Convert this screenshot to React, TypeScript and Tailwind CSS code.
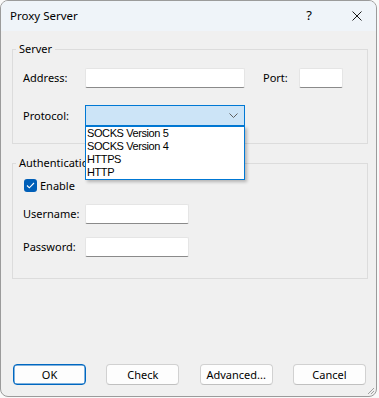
import React from "react";

const ui = { fontFamily: '"Noto Sans", "Open Sans", sans-serif' };
const listFont = { fontFamily: '"Liberation Sans", Arial, sans-serif' };

function TextBox({ w }: { w: string }) {
  return (
    <div
      className={`${w} h-[20px] bg-white border border-[#e5e5e5] border-b-[#8a8a8a] rounded-[2px]`}
    />
  );
}

function Label({ children }: { children: React.ReactNode }) {
  return <span className="w-[62px] shrink-0 text-[11px] leading-[14px] text-black">{children}</span>;
}

function Button({ children, primary }: { children: React.ReactNode; primary?: boolean }) {
  return (
    <button
      className={
        "w-[73px] h-[21px] rounded-[4px] bg-[#fdfdfd] text-[11px] leading-[14px] text-black flex items-center justify-center " +
        (primary
          ? "border border-[#0067c0] shadow-[inset_0_0_0_0.5px_#0067c0]"
          : "border border-[#d1d1d1] border-b-[#c0c0c0]")
      }
    >
      {children}
    </button>
  );
}

export default function App() {
  const protocols = ["SOCKS Version 5", "SOCKS Version 4", "HTTPS", "HTTP"];

  return (
    <div className="w-[379px] h-[398px] bg-[#f9f9f9]" style={ui}>
      <div className="w-[377px] h-[397px] rounded-[8px] border border-[#9b9b9b] bg-[#f0f0f0] flex flex-col overflow-hidden relative">
        {/* title bar */}
        <div className="h-[30px] shrink-0 bg-[#eff4f9] flex items-center pl-[9px] text-[11.5px] text-black">
          <span>Proxy Server</span>
          <span className="ml-auto mr-[40px] text-[13px]">?</span>
          <svg width="10" height="10" viewBox="0 0 10 10" className="mr-[14px]">
            <path d="M0.5 0.5 L9.5 9.5 M9.5 0.5 L0.5 9.5" stroke="#1a1a1a" strokeWidth="1" />
          </svg>
        </div>

        <div className="flex-1 flex flex-col pl-[11px] pr-[8px] pt-[11px]">
          {/* Server */}
          <fieldset className="border border-[#dcdcdc] pb-[17px]">
            <legend className="ml-[3px] px-[3px] text-[11px] leading-[14px] text-black">Server</legend>
            <div className="pl-[10px]">
              <div className="flex items-center mt-[12px] h-[20px]">
                <Label>Address:</Label>
                <TextBox w="w-[160px]" />
                <span className="ml-[18px] w-[36px] text-[11px] leading-[14px] text-black">Port:</span>
                <TextBox w="w-[44px]" />
              </div>
              <div className="flex items-center mt-[17px] h-[21px]">
                <Label>Protocol:</Label>
                <div className="relative w-[160px] h-[21px]">
                  <div className="h-full bg-[#cce4f7] border border-[#0078d4] flex items-center justify-end pr-[6px]">
                    <svg width="9" height="5" viewBox="0 0 9 5">
                      <path d="M0.5 0.5 L4.5 4.5 L8.5 0.5" fill="none" stroke="#5f5f5f" strokeWidth="1" />
                    </svg>
                  </div>
                  <div
                    className="absolute left-0 top-full w-[160px] bg-white border border-[#0078d4] z-10 shadow-[2px_2px_3px_rgba(0,0,0,0.25)]"
                    style={listFont}
                  >
                    {protocols.map((p) => (
                      <div key={p} className="h-[13px] pl-[1px] text-[11px] leading-[13px] tracking-[-0.4px] text-black">
                        {p}
                      </div>
                    ))}
                  </div>
                </div>
              </div>
            </div>
          </fieldset>

          {/* Authentication */}
          <fieldset className="mt-[12px] border border-[#dcdcdc] pb-[21px]">
            <legend className="ml-[3px] px-[3px] text-[11px] leading-[14px] text-black">Authentication</legend>
            <div className="pl-[10px]">
              <div className="flex items-center mt-[9px] h-[13px] ml-[1px]">
                <div className="w-[13px] h-[13px] rounded-[3px] bg-[#005fb8] flex items-center justify-center">
                  <svg width="9" height="7" viewBox="0 0 9 7">
                    <path d="M1 3.5 L3.3 5.8 L8 1" fill="none" stroke="white" strokeWidth="1.1" />
                  </svg>
                </div>
                <span className="ml-[3px] text-[11px] leading-[14px] text-black">Enable</span>
              </div>
              <div className="flex items-center mt-[12px] h-[20px]">
                <Label>Username:</Label>
                <TextBox w="w-[104px]" />
              </div>
              <div className="flex items-center mt-[13px] h-[20px]">
                <Label>Password:</Label>
                <TextBox w="w-[104px]" />
              </div>
            </div>
          </fieldset>

          {/* buttons */}
          <div className="mt-auto mb-[11px] ml-[1px] mr-[2px] flex justify-between">
            <Button primary>OK</Button>
            <Button>Check</Button>
            <Button>Advanced...</Button>
            <Button>Cancel</Button>
          </div>
        </div>

        {/* resize grip */}
        <svg width="10" height="10" viewBox="0 0 10 10" className="absolute right-[1px] bottom-[1px]">
          <path d="M9 3 L3 9 M9 6 L6 9" stroke="#a0a0a0" strokeWidth="1" />
        </svg>
      </div>
    </div>
  );
}
